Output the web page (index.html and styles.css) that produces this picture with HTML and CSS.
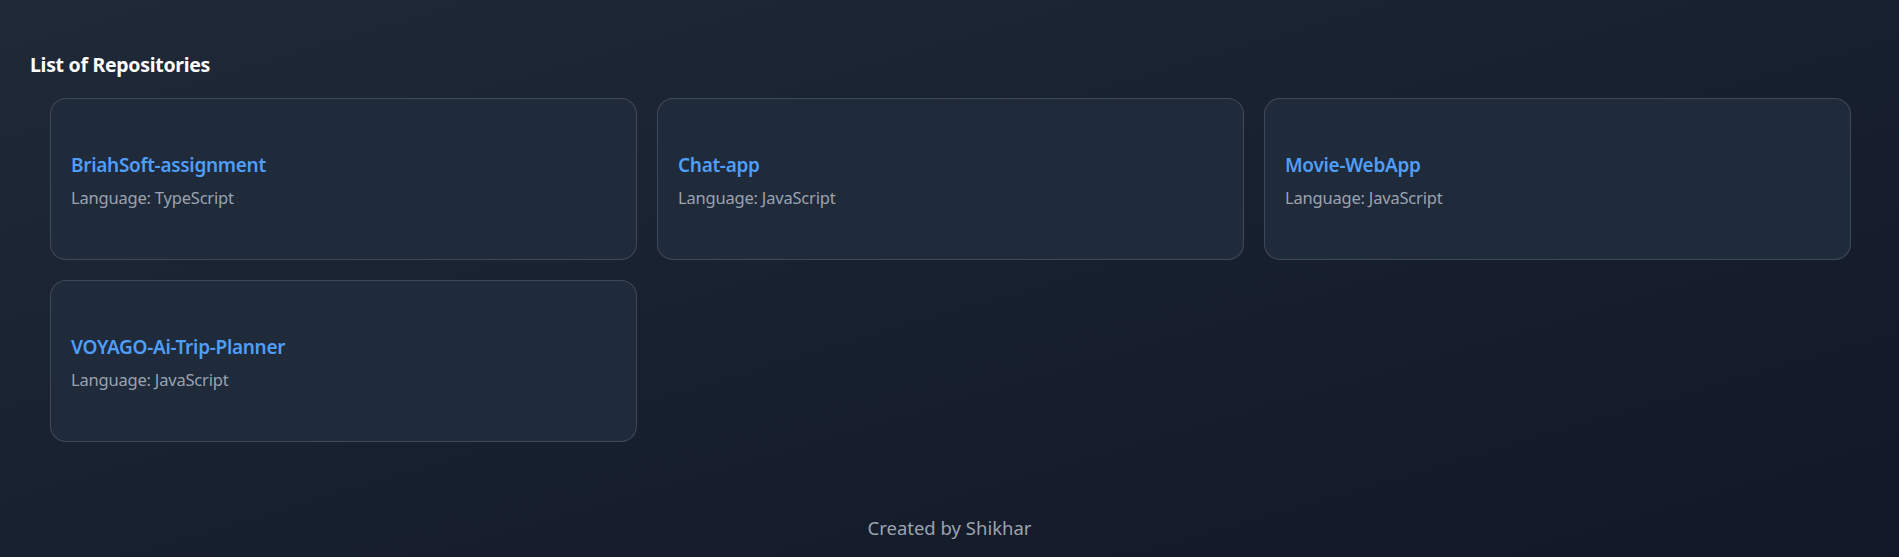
FILE: index.html
```html
<!DOCTYPE html>
<html lang="en">
<head>
<meta charset="utf-8">
<title>Repositories</title>
<link rel="stylesheet" href="styles.css">
</head>
<body>
<main class="page">
  <h2 class="title">List of Repositories</h2>
  <div class="grid">
    <div class="card">
      <h3 class="repo-name">BriahSoft-assignment</h3>
      <p class="repo-lang">Language: TypeScript</p>
    </div>
    <div class="card">
      <h3 class="repo-name">Chat-app</h3>
      <p class="repo-lang">Language: JavaScript</p>
    </div>
    <div class="card">
      <h3 class="repo-name">Movie-WebApp</h3>
      <p class="repo-lang">Language: JavaScript</p>
    </div>
    <div class="card">
      <h3 class="repo-name">VOYAGO-Ai-Trip-Planner</h3>
      <p class="repo-lang">Language: JavaScript</p>
    </div>
  </div>
</main>
<footer class="footer">Created by Shikhar</footer>
</body>
</html>
```
FILE: styles.css
```css
html, body {
  margin: 0;
  padding: 0;
}
body {
  min-height: 557px;
  background: linear-gradient(to bottom right, #1f2937, #111827);
  font-family: "Noto Sans", "Open Sans", sans-serif;
  color: #fff;
  display: flex;
  flex-direction: column;
}
.page {
  padding: 51px 48px 0 30px;
}
.title {
  margin: 0 0 19px 0;
  font-size: 19.5px;
  line-height: 28px;
  font-weight: 700;
  color: #ffffff;
  letter-spacing: -0.3px;
}
.grid {
  display: grid;
  grid-template-columns: repeat(3, 1fr);
  gap: 20px;
  margin-left: 20px;
}
.card {
  box-sizing: border-box;
  height: 162px;
  padding: 0 20px;
  border: 1px solid rgba(75, 85, 99, 0.75);
  border-radius: 16px;
  background: #1f2a3b;
  display: flex;
  flex-direction: column;
  justify-content: center;
}
.repo-name {
  margin: 3.5px 0 0 0;
  font-size: 19px;
  line-height: 28px;
  font-weight: 600;
  color: #4f9ef8;
  letter-spacing: -0.3px;
}
.repo-lang {
  margin: 7px 0 0 0;
  font-size: 16.5px;
  line-height: 24px;
  color: #9ca3af;
  letter-spacing: -0.2px;
}
.footer {
  margin-top: auto;
  padding: 0 0 15px 0;
  text-align: center;
  font-size: 18.5px;
  line-height: 28px;
  color: #9ca3af;
}
```
